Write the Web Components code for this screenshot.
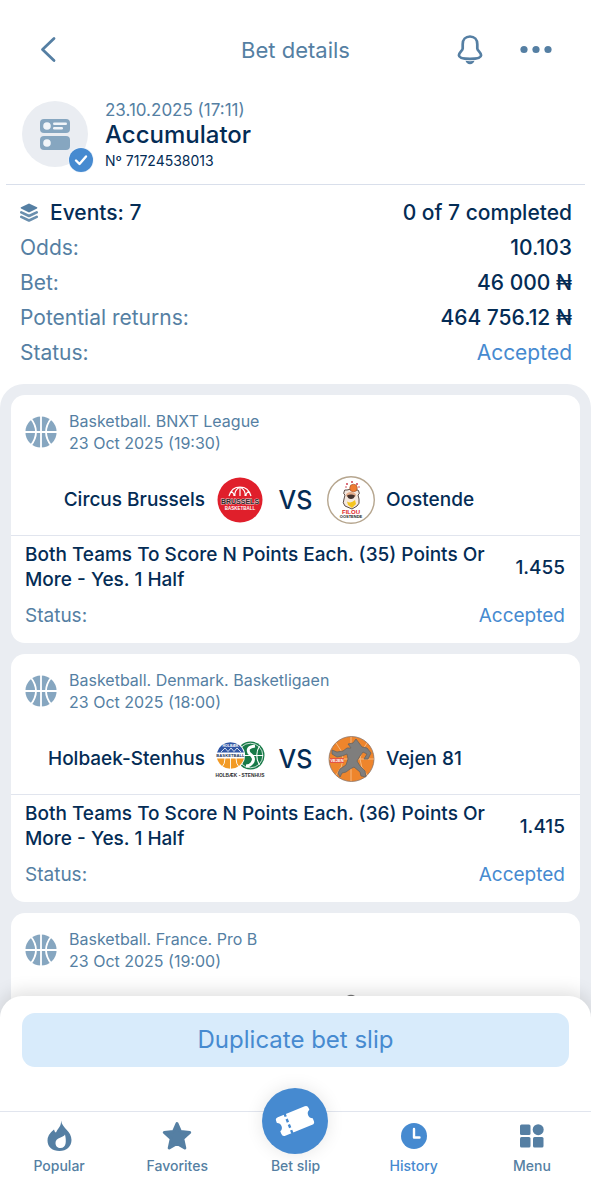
<!DOCTYPE html>
<html lang="en">
<head>
<meta charset="utf-8">
<meta name="viewport" content="width=device-width, initial-scale=1">
<title>Bet details</title>
<style>
  :root {
    --navy: #042c55;
    --slate: #557fa3;
    --blue: #468ad0;
    --soft: #86a6c0;
    --panel: #eaedf2;
    --line: #e1e5ee;
  }
  html, body { margin: 0; height: 100%; background: #fff; }
  body { font-family: Inter, "Liberation Sans", sans-serif; color: var(--navy); }
</style>
</head>
<body>
<bet-app>
  <app-header slot="top">Bet details</app-header>
  <slip-summary slot="top">
    <span slot="date">23.10.2025 (17:11)</span>
    <span slot="title">Accumulator</span>
    <span slot="number">Nº 71724538013</span>
  </slip-summary>
  <slip-totals slot="top">
    <total-row strong><stack-icon slot="icon"></stack-icon><span slot="label">Events: 7</span>0 of 7 completed</total-row>
    <total-row><span slot="label">Odds:</span>10.103</total-row>
    <total-row><span slot="label">Bet:</span>46 000 ₦</total-row>
    <total-row><span slot="label">Potential returns:</span>464 756.12 ₦</total-row>
    <total-row accepted><span slot="label">Status:</span>Accepted</total-row>
  </slip-totals>

  <event-card>
    <span slot="league">Basketball. BNXT League</span>
    <span slot="time">23 Oct 2025 (19:30)</span>
    <match-up slot="match">
      <span slot="home">Circus Brussels</span><team-crest slot="home-crest" name="brussels"></team-crest>
      <span slot="away">Oostende</span><team-crest slot="away-crest" name="filou"></team-crest>
    </match-up>
    <market-line slot="market">
      Both Teams To Score N Points Each. (35) Points Or More - Yes. 1 Half
      <span slot="odds">1.455</span><span slot="status">Accepted</span>
    </market-line>
  </event-card>

  <event-card>
    <span slot="league">Basketball. Denmark. Basketligaen</span>
    <span slot="time">23 Oct 2025 (18:00)</span>
    <match-up slot="match">
      <span slot="home">Holbaek-Stenhus</span><team-crest slot="home-crest" name="holbaek"></team-crest>
      <span slot="away">Vejen 81</span><team-crest slot="away-crest" name="vejen"></team-crest>
    </match-up>
    <market-line slot="market">
      Both Teams To Score N Points Each. (36) Points Or More - Yes. 1 Half
      <span slot="odds">1.415</span><span slot="status">Accepted</span>
    </market-line>
  </event-card>

  <event-card>
    <span slot="league">Basketball. France. Pro B</span>
    <span slot="time">23 Oct 2025 (19:00)</span>
    <crest-row slot="match"><team-crest name="plain"></team-crest></crest-row>
  </event-card>

  <action-sheet slot="bottom">Duplicate bet slip</action-sheet>
  <tab-bar slot="bottom">
    <tab-item icon="flame">Popular</tab-item>
    <tab-item icon="star">Favorites</tab-item>
    <tab-item icon="ticket" raised>Bet slip</tab-item>
    <tab-item icon="clock" active>History</tab-item>
    <tab-item icon="grid">Menu</tab-item>
  </tab-bar>
</bet-app>

<script>
const define = (name, css, html) => {
  customElements.define(name, class extends HTMLElement {
    constructor() {
      super();
      const root = this.attachShadow({ mode: 'open' });
      const template = document.createElement('template');
      const body = typeof html === 'function' ? html(this) : html;
      template.innerHTML = `<style>*{box-sizing:border-box}svg{display:block}${css}</style>${body}`;
      root.append(template.content.cloneNode(true));
    }
  });
};

define('bet-app', `
  :host { display: flex; flex-direction: column; height: 100vh; overflow: hidden; background: #fff; }
  .scroll { flex: 1; min-height: 0; overflow-y: auto; scrollbar-width: none; display: flex; flex-direction: column; }
  .events { flex: none; display: grid; gap: 11px; background: var(--panel); border-radius: 24px 24px 0 0; padding: 11px 11px 36px; }
  .dock { position: relative; z-index: 1; margin-top: -24px; background: #fff; border-radius: 22px 22px 0 0; box-shadow: 0 -4px 18px rgba(0,0,0,.13); }
`, `
  <main class="scroll"><slot name="top"></slot><section class="events"><slot></slot></section></main>
  <footer class="dock"><slot name="bottom"></slot></footer>
`);

define('app-header', `
  :host { display: block; color: var(--slate); flex: none; }
  header { display: grid; grid-template-columns: 1fr auto 1fr; align-items: center; height: 68px; margin-top: 16px; padding: 0 37px 0 34px; }
  h1 { margin: 0; padding-left: 3px; font-size: 22px; line-height: 28px; font-weight: 400; }
  button { display: block; border: 0; background: none; padding: 0; color: inherit; }
  .right { display: flex; justify-content: flex-end; align-items: center; gap: 26px; }
`, `
  <header>
    <div><button aria-label="Back"><svg width="28" height="32" viewBox="0 0 28 32" fill="none" stroke="currentColor" stroke-width="2.800" stroke-linecap="round" stroke-linejoin="round"><path d="M20 4.500L8.500 15.500L20 26.500"/></svg></button></div>
    <h1><slot></slot></h1>
    <div class="right">
      <button aria-label="Notifications"><svg width="44" height="32" viewBox="-8 0 44 32" fill="none" stroke="currentColor" stroke-width="2.700" stroke-linejoin="round"><path d="M14 2.500C9.500 2.500 6.700 5.700 6.700 10.200V14.500C6.700 16.600 2.900 18.400 2.900 21.200C2.900 24.300 9 24.800 14 24.800S25.100 24.300 25.100 21.200C25.100 18.400 21.300 16.600 21.300 14.500V10.200C21.300 5.700 18.500 2.500 14 2.500Z"/><path fill="currentColor" stroke="none" d="M9.500 26.800Q14 27.600 18.500 26.800Q17.300 30.200 14 30.200T9.500 26.800Z"/></svg></button>
      <button aria-label="More"><svg width="36" height="32" viewBox="0 0 36 32" fill="currentColor"><circle cx="6" cy="15.500" r="3.600"/><circle cx="18" cy="15.500" r="3.600"/><circle cx="30" cy="15.500" r="3.600"/></svg></button>
    </div>
  </header>
`);

define('slip-summary', `
  :host { display: block; flex: none; margin: 0 6px; padding: 16px 16px 12px; border-bottom: 1px solid #d9dfeb; }
  .row { display: flex; gap: 17px; }
  .avatar { position: relative; width: 66px; height: 68px; }
  .badge { position: absolute; left: 46px; top: 47px; }
  .text { display: grid; align-content: start; }
  .date { font-size: 17px; line-height: 20px; color: var(--slate); }
  h2 { margin: 0; font-size: 24px; line-height: 30px; font-weight: 500; }
  .num { font-size: 14px; line-height: 22px; }
`, `
  <div class="row">
    <div class="avatar">
      <svg width="66" height="68" viewBox="0 0 66 68"><circle cx="33" cy="34" r="33" fill="#eaedf2"/><g fill="#86a6c0"><rect x="18" y="19" width="30" height="14" rx="4"/><rect x="18" y="36" width="30" height="14" rx="4"/></g><g fill="#f1f5f9"><circle cx="25" cy="26" r="3.800"/><circle cx="25" cy="43" r="3.800"/><rect x="31" y="22.500" width="14" height="2.600" rx="1.300"/><rect x="31" y="27" width="10" height="2.600" rx="1.300"/></g></svg>
      <svg class="badge" width="26" height="26" viewBox="0 0 26 26"><circle cx="13" cy="13" r="12.800" fill="#eef4fb"/><circle cx="13" cy="13" r="12" fill="#468ad0"/><path d="M8 13.500L11.500 17L18 9.500" fill="none" stroke="#fff" stroke-width="2.400" stroke-linecap="round" stroke-linejoin="round"/></svg>
    </div>
    <div class="text"><div class="date"><slot name="date"></slot></div><h2><slot name="title"></slot></h2><div class="num"><slot name="number"></slot></div></div>
  </div>
`);

define('slip-totals', `
  :host { display: block; flex: none; padding: 10px 19px 14px 20px; }
`, `<slot></slot>`);

define('total-row', `
  :host { display: flex; align-items: center; justify-content: space-between; height: 35px; font-size: 21px; line-height: 35px; font-weight: 500; }
  .label { display: flex; align-items: center; gap: 12px; font-weight: 400; color: var(--slate); }
  :host([strong]) .label { font-weight: 500; color: var(--navy); }
  :host([accepted]) { font-weight: 400; }
  :host([accepted]) .value { color: var(--blue); }
`, `<span class="label"><slot name="icon"></slot><slot name="label"></slot></span><span class="value"><slot></slot></span>`);

define('stack-icon', `:host { display: block; color: var(--slate); }`, `
  <svg width="18" height="20" viewBox="0 0 18 20"><path d="M9 .500L17 4.300Q17.800 4.900 17 5.500L9 9.500L1 5.500Q.200 4.900 1 4.300Z" fill="currentColor"/><path d="M1.300 9.300L9 13L16.700 9.300M1.300 13.800L9 17.500L16.700 13.800" fill="none" stroke="#6a8fae" stroke-width="2.600" stroke-linecap="round" stroke-linejoin="round"/></svg>`);

define('event-card', `
  :host { display: block; background: #fff; border-radius: 14px; overflow: hidden; }
  .head { display: flex; align-items: center; gap: 12px; padding: 15px 14px 0; font-size: 16px; line-height: 22px; color: var(--slate); }
`, `
  <article>
    <div class="head">
      <svg width="32" height="32" viewBox="0 0 32 32"><circle cx="16" cy="16" r="15.600" fill="#86a6c0"/><path d="M0 16H32M16 0V32M5.500 2Q16.500 16 5.500 30M26.500 2Q15.500 16 26.500 30" fill="none" stroke="#fff" stroke-width="1.800"/></svg>
      <div><div><slot name="league"></slot></div><div><slot name="time"></slot></div></div>
    </div>
    <slot name="match"></slot><slot name="market"></slot>
  </article>
`);

define('match-up', `
  :host { display: grid; grid-template-columns: 1fr 50px 61px 50px 1fr; align-items: center; height: 70px; margin-top: 11px; border-bottom: 1px solid var(--line); font-size: 19px; line-height: 24px; font-weight: 500; }
  .home { text-align: right; padding-right: 10px; }
  .away { padding-left: 10px; }
  .vs { text-align: center; font-size: 25px; }
`, `<span class="home"><slot name="home"></slot></span><slot name="home-crest"></slot><span class="vs">VS</span><slot name="away-crest"></slot><span class="away"><slot name="away"></slot></span>`);

define('crest-row', `
  :host { display: grid; grid-template-columns: 1fr 50px 61px 50px 1fr; align-items: center; height: 70px; margin-top: 11px; }
  ::slotted(*) { grid-column: 4; }
`, `<slot></slot>`);

define('market-line', `
  :host { display: block; padding: 6px 15px 15px 14px; font-size: 19px; line-height: 25px; font-weight: 500; }
  .pick { display: flex; align-items: center; justify-content: space-between; gap: 22px; }
  .state { display: flex; justify-content: space-between; margin-top: 11px; font-weight: 400; color: var(--slate); }
  .state span:last-child { color: var(--blue); }
`, `<div class="pick"><span><slot></slot></span><slot name="odds"></slot></div><div class="state"><span>Status:</span><span><slot name="status"></slot></span></div>`);

const crests = {
  brussels: `<circle cx="25" cy="25" r="22.500" fill="#e01f2b"/><g fill="none" stroke="#fff" stroke-width="1.200"><path d="M14 21Q16.500 12 25 12T36 21M25 12V21M20 21Q19 16 24 12.500M30 21Q31 16 26 12.500M16 16Q19 18 19 21M34 16Q31 18 31 21"/></g><text x="25" y="29" text-anchor="middle" font-family="Liberation Sans" font-weight="700" font-size="7" fill="#33262a" stroke="#e9c9ca" stroke-width="1" paint-order="stroke">BRUSSELS</text><text x="25" y="35" text-anchor="middle" font-family="Liberation Sans" font-weight="700" font-size="4.500" fill="#fff">BASKETBALL</text>`,
  filou: `<circle cx="25" cy="25" r="23.300" fill="#fff" stroke="#b6a68f" stroke-width="1.400"/><g fill="#cf4050"><circle cx="21" cy="9" r="1"/><circle cx="26" cy="7" r="1"/><circle cx="31" cy="9" r="1"/><circle cx="20" cy="12" r=".800"/><circle cx="33" cy="12" r=".800"/></g><path d="M18 17Q18 14 21 15Q25 13 29 15Q33 14 33 17Q34 19 32 20L33 24Q34 29 31 31L26 34L19 31Q16 28 18 24L19 20Q17 19 18 17Z" fill="#f4e8df" stroke="#4a3b36" stroke-width=".900"/><circle cx="27.500" cy="13" r="3.800" fill="#ef7b31" stroke="#9b4f29" stroke-width=".600"/><ellipse cx="25" cy="20" rx="5" ry="3" fill="#e4ad8c"/><path d="M21 20.500Q25 18.500 29 20.500Q28 24 25 24T21 20.500Z" fill="#43322e"/><path d="M21 26.500Q25 29 29 25L30 29L26 33L22 30Z" fill="#f5c51f"/><text x="25" y="38.500" text-anchor="middle" font-family="Liberation Sans" font-weight="700" font-size="6" fill="#dd2026">FILOU</text><text x="25" y="42.500" text-anchor="middle" font-family="Liberation Sans" font-weight="700" font-size="4" fill="#222">OOSTENDE</text>`,
  holbaek: `<circle cx="35.500" cy="21.500" r="14" fill="#187a48"/><circle cx="35.500" cy="21.500" r="12.300" fill="none" stroke="#fff" stroke-width=".800"/><path d="M23 21.500H48M44.500 12Q39 21 44.500 31" fill="none" stroke="#fff" stroke-width="1.100"/><path d="M40 12Q31 13 34 19Q41 24 37 29Q35 32 31 32" fill="none" stroke="#fff" stroke-width="3"/><circle cx="15.500" cy="21.500" r="14.600" fill="#fff"/><path d="M2 18.500A14 14 0 0 1 29 18.500Z" fill="#3157a5"/><path d="M2 24.500H29A14 14 0 0 1 2 24.500Z" fill="#f29a25"/><path d="M6 18L10 14L13 17.500L16 14L19 17.500L22 14L26 18" fill="none" stroke="#fff" stroke-width=".800"/><path d="M15.500 24V35M10 24Q10 30 7 33M21 24Q21 30 24 33" fill="none" stroke="#fff" stroke-width=".900"/><text x="15.500" y="12.500" text-anchor="middle" font-family="Liberation Sans" font-weight="700" font-size="3.500" fill="#fff">HOLBÆK</text><text x="15.500" y="23" text-anchor="middle" font-family="Liberation Sans" font-weight="700" font-size="4.200" fill="#21365f">BASKETBALL</text><text x="25" y="42.500" text-anchor="middle" font-family="Liberation Sans" font-weight="700" font-size="4.800" fill="#2c2c2c">HOLBÆK - STENHUS</text>`,
  vejen: `<circle cx="25.500" cy="25" r="22.500" fill="#ee852c" stroke="#8b7467" stroke-width=".800"/><path d="M25 3V47M3 25H48M10 9Q24 25 10 41M41 9Q27 25 41 41" fill="none" stroke="#f7c08a" stroke-width=".900"/><path d="M22 10L27 9L30 5L33 9L36 13L41 14L45 19L42 25L38 25L41 20L37 18L34 22L31 27L34 32L39 37L40 43L35 42L34 38L28 33L24 35L20 38L16 39L14 43L12 39L14 35L20 31L22 25L21 20L16 22L11 23L6 20L6 16L11 18L17 17L21 14L25 14Z" fill="#7f7e7d" stroke="#68635f" stroke-width=".800" stroke-linejoin="round"/><rect x="4" y="24" width="14" height="5" fill="#e55643"/><text x="11" y="28" text-anchor="middle" font-family="Liberation Sans" font-weight="700" font-size="4" fill="#fff">VEJEN</text>`,
  plain: `<path d="M21 3Q25 .500 29 3L27 7H23Z" fill="#777"/><circle cx="25" cy="27" r="20" fill="#777"/>`
};
define('team-crest', `:host { display: block; width: 50px; height: 50px; }`,
  el => `<svg width="50" height="50" viewBox="0 0 50 50" aria-hidden="true">${crests[el.getAttribute('name')]}</svg>`);

define('action-sheet', `
  :host { display: block; padding: 17px 22px 44px; }
  button { display: block; width: 100%; height: 54px; border: 0; border-radius: 13px; background: #d8ebfb; color: var(--blue); font: 400 24px/32px Inter, "Liberation Sans", sans-serif; }
`, `<button><slot></slot></button>`);

define('tab-bar', `
  :host { display: block; border-top: 1px solid var(--line); }
  nav { display: grid; grid-template-columns: repeat(5, 1fr); height: 88px; }
`, `<nav><slot></slot></nav>`);

const icons = {
  flame: `<path fill="currentColor" d="M18 .500C18.500 6.500 15 8 13 12.500Q11.500 12 11 9.500Q4.500 14.500 4.500 20.500C4.500 27 9.500 31 16.500 31S28.500 26.500 28.500 20C28.500 11 19.500 9 18 .500Z"/><path fill="#fff" d="M22 14.500C20 18 12.500 17.500 12.500 23C12.500 26 14.500 28 17.500 28C23.500 28 23.500 21 22 14.500Z"/>`,
  star: `<path fill="currentColor" stroke="currentColor" stroke-width="3" stroke-linejoin="round" d="M16 3.500L19.500 11.500L28.700 12.500L21.800 18.700L23.800 28L16 23.500L8.200 28L10.200 18.700L3.300 12.500L12.500 11.500Z"/>`,
  clock: `<circle cx="16" cy="16" r="13" fill="currentColor"/><path d="M16 9V17.500H21.500" fill="none" stroke="#fff" stroke-width="2.400" stroke-linecap="round" stroke-linejoin="round"/>`,
  grid: `<g fill="currentColor"><rect x="4" y="4.500" width="10.500" height="10.500" rx="1.500"/><circle cx="22.200" cy="9.700" r="5.500"/><rect x="4" y="17" width="10.500" height="10.500" rx="1.500"/><rect x="17" y="17" width="10.500" height="10.500" rx="1.500"/></g>`
};
const ticket = `<svg width="66" height="66" viewBox="0 0 66 66"><g transform="rotate(-22 33 33)"><path fill="#fff" d="M18.500 23H47.500Q50.500 23 50.500 26V28A4.800 4.800 0 0 0 50.500 37V40Q50.500 43 47.500 43H18.500Q15.500 43 15.500 40V37A4.800 4.800 0 0 0 15.500 28V26Q15.500 23 18.500 23Z"/><path d="M26 22V44" stroke="#468ad0" stroke-width="2.400" stroke-dasharray="3.500 2.500"/></g></svg>`;
define('tab-item', `
  :host { display: block; color: var(--slate); }
  :host([active]) { color: var(--blue); }
  a { display: flex; flex-direction: column; align-items: center; color: inherit; text-decoration: none; font-size: 14px; line-height: 18px; font-weight: 500; padding-top: 8px; }
  .icon { position: relative; width: 32px; height: 32px; margin-bottom: 5px; }
  .disc { position: absolute; left: -17px; bottom: -2px; width: 66px; height: 66px; border-radius: 50%; background: var(--blue); box-shadow: 0 0 18px rgba(0,0,0,.1); }
`, el => {
  const key = el.getAttribute('icon');
  const art = el.hasAttribute('raised') ? `<span class="disc">${ticket}</span>` : `<svg width="32" height="32" viewBox="0 0 32 32">${icons[key]}</svg>`;
  return `<a href="#${key}"><span class="icon">${art}</span><slot></slot></a>`;
});
</script>
</body>
</html>
